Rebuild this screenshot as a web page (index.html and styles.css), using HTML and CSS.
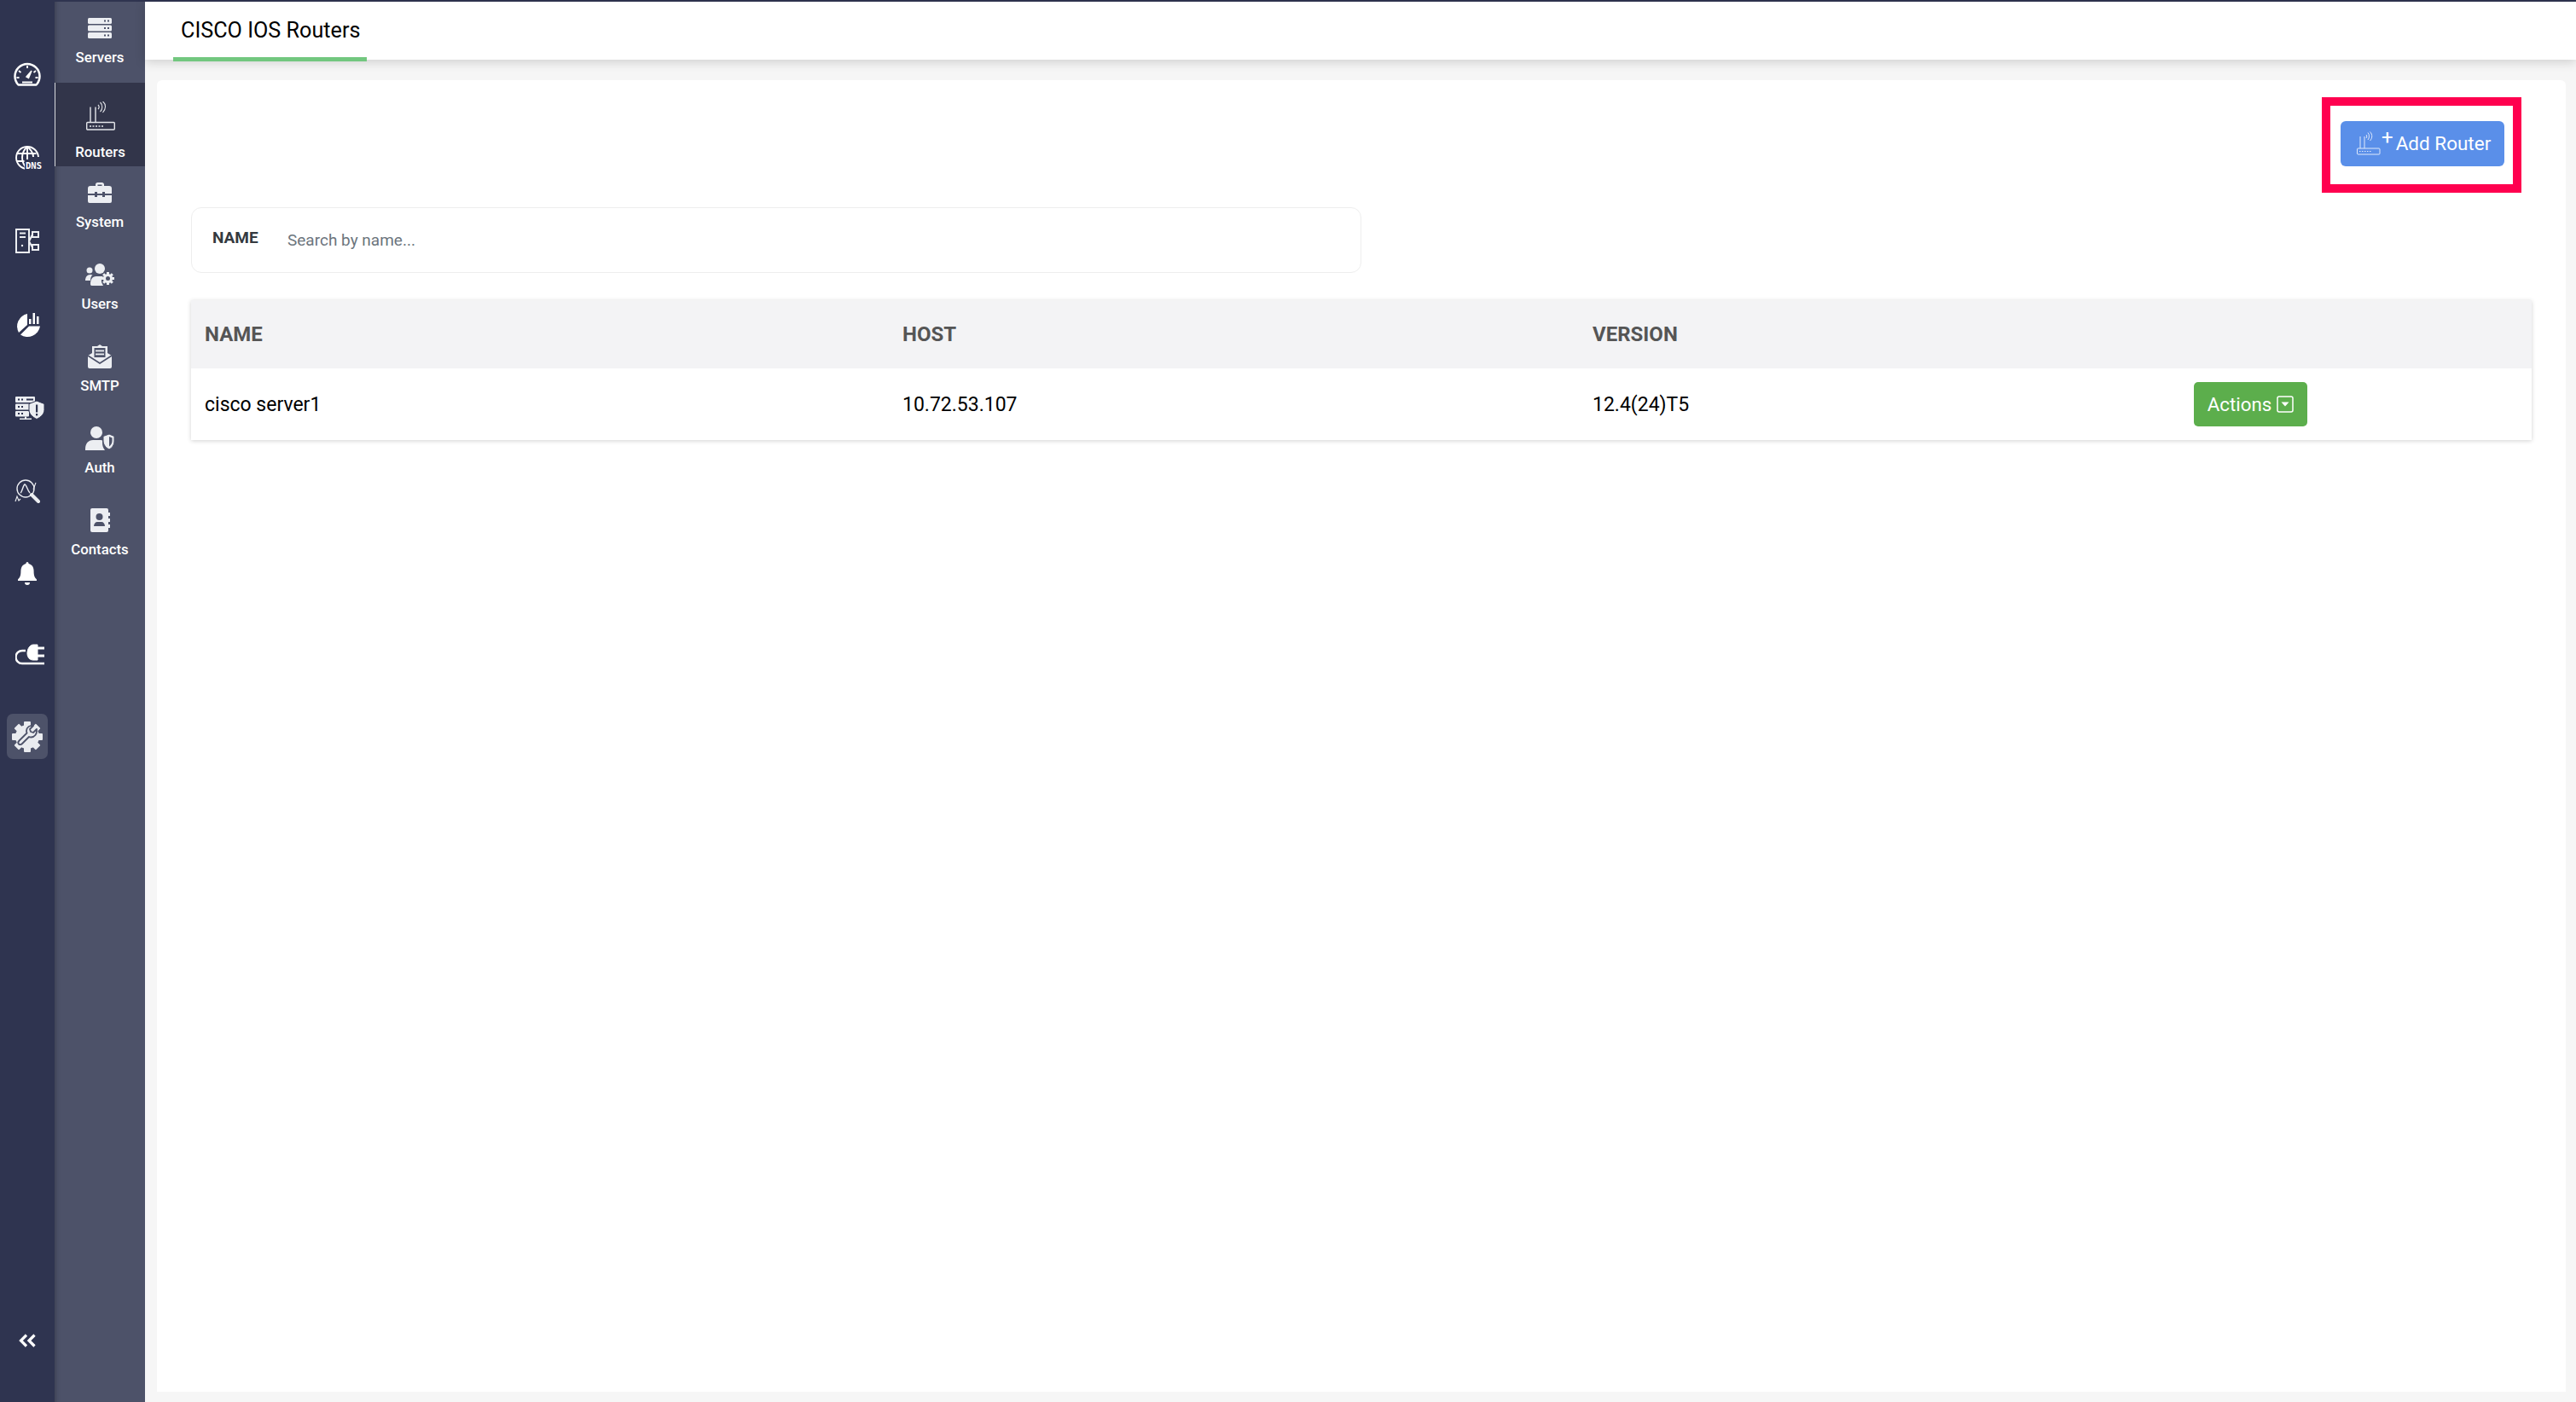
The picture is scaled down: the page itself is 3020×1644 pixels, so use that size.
FILE: index.html
```html
<!DOCTYPE html>
<html lang="en">
<head>
<meta charset="utf-8">
<title>CISCO IOS Routers</title>
<link rel="stylesheet" href="styles.css">
</head>
<body>
<div class="app">
  <nav class="rail">
    <div class="rail-list">
      <a class="rail-item"><svg width="32" height="28" viewBox="0 0 32 28" fill="none" stroke="#fff"><path d="M5.500 26.500A14.500 14.500 0 1 1 26.500 26.500Z" stroke-width="2.500" stroke-linejoin="round"/><path d="M16 4v3M6 10l2.500 2M26 10l-2.500 2M3.500 18h3M25.500 18h3M10 23.500h12" stroke-width="1.800"/><path d="M15 17l6-7-3.500 8.500z" fill="#fff" stroke-width="1.500"/></svg></a>
      <a class="rail-item rail-shifted"><svg width="34" height="28" viewBox="0 0 34 28" fill="none" stroke="#fff" stroke-width="1.900"><path d="M14 27A13 13 0 1 1 27 13"/><path d="M14 1c-8 7-8 18 0 26M14 1c5 4 7 8 7 12M1.500 9h23M1.500 18h9M14 1v26"/><rect x="11" y="16" width="23" height="12" fill="#2f3450" stroke="none"/><text x="12" y="26.500" class="dns-text">DNS</text></svg></a>
      <a class="rail-item"><svg width="28" height="30" viewBox="0 0 28 30" fill="none" stroke="#eceef2" stroke-width="2"><rect x="1" y="1" width="15" height="27"/><path d="M5 5.500h7M5 10h7"/><circle cx="8" cy="20" r="1.200" fill="#eceef2" stroke="none"/><rect x="20" y="4" width="7" height="6"/><rect x="20" y="19" width="7" height="6"/><path d="M16 15l4-8M16 15l4 7"/></svg></a>
      <a class="rail-item"><svg width="30" height="31" viewBox="0 0 30 31" fill="#fff"><path d="M15 2A15 15 0 0 0 5 24L15 15Z"/><path d="M7 26.500A15 15 0 0 0 30 16.500H17Z"/><rect x="17" y="8" width="2.500" height="6"/><rect x="21.500" y="1" width="2.500" height="13"/><rect x="26" y="5" width="2.500" height="9"/></svg></a>
      <a class="rail-item rail-shifted"><svg width="34" height="28" viewBox="0 0 34 28" fill="#eceef2"><rect x="0" y="0" width="23" height="7" rx="1"/><rect x="0" y="8.500" width="17" height="7" rx="1"/><rect x="0" y="17" width="16" height="6.500" rx="1"/><path d="M11 23.500h2v2h6v1.500H5v-1.500h6z"/><path d="M25 5l9 3.500v7c0 5-4 8.500-9 11-5-2.500-9-6-9-11v-7z" stroke="#2f3450" stroke-width="1"/><rect x="24" y="9.500" width="2.200" height="9" fill="#2f3450"/><rect x="24" y="20" width="2.200" height="2.400" fill="#2f3450"/><g fill="#2f3450"><rect x="3" y="2.500" width="2" height="2"/><rect x="7" y="2.500" width="2" height="2"/><rect x="13" y="2.500" width="8" height="2"/><rect x="3" y="11" width="2" height="2"/><rect x="7" y="11" width="2" height="2"/><rect x="3" y="19" width="2" height="2"/><rect x="7" y="19" width="2" height="2"/></g></svg></a>
      <a class="rail-item"><svg width="30" height="30" viewBox="0 0 30 30" fill="none" stroke="#eceef2"><circle cx="13" cy="11" r="10" stroke-width="1.400"/><path d="M7 16c2-1 3-9 5-10 2 0 3 7 6 10" stroke-width="1.400"/><path d="M20 18l8 8" stroke-width="4" stroke-linecap="round"/><path d="M1 26l2-6 2 5 2-2M22 12l3-8" stroke-width="1.100"/></svg></a>
      <a class="rail-item rail-tight"><svg width="22" height="27" viewBox="0 0 22 27" fill="#fff"><path d="M11 0c1 0 1.500.8 1.600 2 4 1 6 4 6 9 0 5 1 7 3.400 9.500v1.500H0v-1.500C2.400 18 3.400 16 3.400 11c0-5 2-8 6-9C9.500.8 10 0 11 0z"/><path d="M8 24h6a3 3 0 0 1-6 0z"/></svg></a>
      <a class="rail-item rail-shifted rail-tight"><svg width="34" height="25" viewBox="0 0 34 25" fill="none" stroke="#fff"><path d="M12 8H8a6 6 0 0 0 0 15h26" stroke-width="2.400"/><path d="M14 11c0-5 3-10 7-10h5v18h-5c-4 0-7-3-7-8z" fill="#fff" stroke-width="1"/><path d="M26 5h8M26 14h8" stroke-width="2.800"/></svg></a>
      <a class="rail-item rail-item-active"><svg width="36" height="36" viewBox="0 0 36 36"><g fill="#e9ebef"><circle cx="18" cy="18" r="14"/><rect x="14" y="0" width="8" height="36" rx="1"/><rect x="14" y="0" width="8" height="36" rx="1" transform="rotate(45 18 18)"/><rect x="14" y="0" width="8" height="36" rx="1" transform="rotate(90 18 18)"/><rect x="14" y="0" width="8" height="36" rx="1" transform="rotate(135 18 18)"/></g><path d="M29 9l-4 4-3-1-1-3 4-4c-4-1-8 2-8 6 0 1 .2 1.800.6 2.500L8.500 22.500c-1.500 1.500-1.500 3-.5 4s2.500 1 4-.5l8-8c.8.4 1.600.5 2.500.5 4 0 7-4 6.500-8z" fill="none" stroke="#4d5269" stroke-width="1.800" stroke-linejoin="round"/></svg></a>
    </div>
    <a class="rail-collapse"><svg width="20" height="16" viewBox="0 0 20 16" fill="none" stroke="#fff" stroke-width="3.200"><path d="M9 1.500L2.500 8 9 14.500M18.500 1.500L12 8l6.500 6.500"/></svg></a>
  </nav>

  <nav class="subnav">
    <a class="sub-item sub-servers"><svg width="28" height="24" viewBox="0 0 28 24"><g fill="#eceef2"><rect y="0" width="28" height="7" rx="1.500"/><rect y="8.500" width="28" height="7" rx="1.500"/><rect y="17" width="28" height="7" rx="1.500"/></g><g fill="#4d5269"><rect x="19" y="2.500" width="2" height="2"/><rect x="23" y="2.500" width="2" height="2"/><rect x="19" y="11" width="2" height="2"/><rect x="23" y="11" width="2" height="2"/><rect x="19" y="19.500" width="2" height="2"/><rect x="23" y="19.500" width="2" height="2"/></g></svg><span>Servers</span></a>
    <a class="sub-item sub-routers"><svg width="34" height="34" viewBox="0 0 34 34" fill="none" stroke="#e4e6ea" stroke-width="1.400"><rect x=".7" y="24.500" width="32.600" height="8.500" rx="1"/><path d="M5 24.500V6.500M11 24.500V6.500"/><path d="M14 9c1.400-1.500 1.400-3.500 0-5M16.500 12c3-3 3-8 0-11M19.500 13c4-4.500 4-10 0-13" stroke-width="1.100"/><path d="M4 29h2M7.500 29h2M11 29h2M14.500 29h2M18 29h2" stroke-width="1.500"/></svg><span>Routers</span></a>
    <a class="sub-item"><svg width="28" height="24" viewBox="0 0 28 24" fill="#eceef2"><path d="M9 4V2.500C9 1 10 0 11.500 0h5C18 0 19 1 19 2.500V4h-2.500V2.500h-5V4z"/><path d="M0 7a3 3 0 0 1 3-3h22a3 3 0 0 1 3 3v6h-8v-2h-3v2h-6v-2H8v2H0z"/><path d="M0 15h8v2h3v-2h6v2h3v-2h8v7a2 2 0 0 1-2 2H2a2 2 0 0 1-2-2z"/></svg><span>System</span></a>
    <a class="sub-item"><svg width="34" height="26" viewBox="0 0 34 26" fill="#eceef2"><circle cx="17" cy="6" r="6"/><circle cx="5" cy="8" r="3.500"/><path d="M0 20c0-4 2-7 6-7 1 0 2 .2 2.500.6C6.500 15 6 18 6 20z"/><path d="M7.500 26c-1 0-1.500-1-1.500-2 0-5 2-9 7-9h8c-2 2-3 6-1 9l1 2z"/><g transform="translate(26.500 17.500)"><circle r="5.500"/><rect x="-1.500" y="-7.500" width="3" height="15"/><rect x="-1.500" y="-7.500" width="3" height="15" transform="rotate(45)"/><rect x="-1.500" y="-7.500" width="3" height="15" transform="rotate(90)"/><rect x="-1.500" y="-7.500" width="3" height="15" transform="rotate(135)"/><circle r="2.500" fill="#4d5269"/></g></svg><span>Users</span></a>
    <a class="sub-item"><svg width="28" height="28" viewBox="0 0 28 28" fill="#eceef2"><path d="M14 0l3 2h6v8l5 3v13a2 2 0 0 1-2 2H2a2 2 0 0 1-2-2V13l5-3V2h6z"/><path d="M7.500 4h13v11h-13z" fill="#4d5269"/><rect x="9" y="6.500" width="10" height="1.800"/><rect x="9" y="10.500" width="10" height="1.800"/><path d="M0 13l14 9 14-9" fill="none" stroke="#4d5269" stroke-width="1.800"/></svg><span>SMTP</span></a>
    <a class="sub-item"><svg width="34" height="28" viewBox="0 0 34 28" fill="#eceef2"><circle cx="13" cy="7" r="7"/><path d="M0 28c-.3-7 3-12 9-12h8c1 0 2 .1 3 .5v3c0 3 1 6 3 8.500z"/><path d="M28 9l6 2.500v5.500c0 5-3 8.500-6 10-3-1.500-7-5-7-10v-5.500z" stroke="#4d5269" stroke-width="1"/><path d="M28 12l3.500 1.500v3.500c0 3-1.500 5-3.500 6.500z" fill="#4d5269"/></svg><span>Auth</span></a>
    <a class="sub-item"><svg width="24" height="28" viewBox="0 0 24 28" fill="#eceef2"><path d="M3 0h17a2 2 0 0 1 2 2v24a2 2 0 0 1-2 2H3a2 2 0 0 1-2-2V2a2 2 0 0 1 2-2z"/><rect x="22" y="5" width="2" height="4"/><rect x="22" y="12" width="2" height="4"/><rect x="22" y="19" width="2" height="4"/><circle cx="11.500" cy="10" r="4" fill="#4d5269"/><path d="M5 21c0-3 2-5 4-5h5c2 0 4 2 4 5z" fill="#4d5269"/></svg><span>Contacts</span></a>
  </nav>

  <div class="main">
    <header class="topbar">
      <div class="tab">CISCO IOS Routers</div>
    </header>
    <main class="card">
      <div class="toolbar">
        <div class="callout">
          <button class="btn-add"><svg width="28" height="28" viewBox="0 0 28 28" fill="none" stroke="#dfe9fb" stroke-width="1"><rect x=".5" y="20" width="26.500" height="7" rx="1"/><path d="M4 20V6M9 20V6"/><path d="M11 8c1-1 1-3 0-4M13 10c2-2.500 2-6 0-8.500M15.500 11c3-3 3-7.500 0-10.500"/><path d="M3 23.500h1.500M6 23.500h1.500M9 23.500h1.500M12 23.500h1.500M15 23.500h1.500"/></svg><span class="plus">+</span><span>Add Router</span></button>
        </div>
      </div>
      <div class="filter">
        <label class="filter-label" for="name-search">NAME</label>
        <input class="filter-input" id="name-search" type="text" placeholder="Search by name...">
      </div>
      <div class="table">
        <div class="row row-head">
          <div>NAME</div><div>HOST</div><div>VERSION</div><div></div>
        </div>
        <div class="row row-body">
          <div>cisco server1</div><div>10.72.53.107</div><div>12.4(24)T5</div>
          <div><button class="btn-actions">Actions<svg width="20" height="20" viewBox="0 0 20 20"><rect x="1" y="1" width="18" height="18" rx="2" fill="none" stroke="#fff" stroke-width="1.500"/><path d="M5.500 7.500h9L10 12.500z" fill="#fff"/></svg></button></div>
        </div>
      </div>
    </main>
  </div>
</div>
</body>
</html>
```
FILE: styles.css
```css
* { box-sizing: border-box; }
html, body { margin: 0; height: 100%; }
body { font-family: Roboto, "Liberation Sans", sans-serif; overflow: hidden; background: #f6f6f6; }
button { font-family: inherit; }

.app { display: flex; height: 1644px; padding-top: 2px; background: #2f3450; }

.rail { width: 64px; flex: none; display: flex; flex-direction: column; align-items: center; background: #2f3450; }
.rail-list { display: flex; flex-direction: column; align-items: center; padding-top: 36px; flex: 1; }
.rail-item { width: 48px; height: 98px; display: flex; align-items: center; justify-content: center; }
.rail-shifted { padding-left: 6px; }
.rail-tight { margin-top: -3px; }
.rail-item-active { height: 53px; margin-top: 21px; background: #4d5269; border-radius: 7px; }
.rail-collapse { display: flex; padding-bottom: 64px; }
.dns-text { font: 700 10.500px "DejaVu Sans Mono", monospace; fill: #fff; stroke: none; }

.subnav { width: 106px; flex: none; display: flex; flex-direction: column; background: #4d5269; box-shadow: inset 6px 0 6px -6px rgba(0,0,0,.35); }
.sub-item { height: 96px; display: flex; flex-direction: column; align-items: center; padding-top: 17px; gap: 11px; color: #fff; font-size: 16.800px; line-height: 18px; font-weight: 500; }
.sub-item svg { height: 28px; flex: none; }
.sub-item span { display: block; }
.sub-servers { height: 95px; }
.sub-routers { height: 98px; padding-top: 22px; gap: 16px; background: #32354a; border-left: 1px solid #d8dade; }
.sub-routers svg { height: 34px; }

.main { flex: 1; min-width: 0; display: flex; flex-direction: column; background: #f6f6f6; }
.topbar { height: 68px; flex: none; padding-left: 33px; background: #fff; box-shadow: 0 3px 12px rgba(0,0,0,.16); position: relative; }
.tab { display: inline-block; width: 227px; height: 70px; padding: 20px 0 0 9px; font-size: 25.200px; line-height: 28px; color: #000; border-bottom: 5px solid #72c77f; }
.card { width: 2824px; height: 1538px; margin: 24px 0 0 14px; padding: 20px 40px 0; background: #fff; border-radius: 6px 6px 0 0; }

.toolbar { display: flex; justify-content: flex-end; padding-right: 12px; }
.callout { width: 234px; height: 112px; padding: 18px 10px 0 12px; border: 10px solid #ff004f; }
.btn-add { width: 192px; height: 53px; display: flex; align-items: center; padding: 0 0 1px 19px; border: 0; border-radius: 6px; background: #5a8fe9; color: #fff; font-size: 22.500px; }
.plus { margin: -14px 3px 0 1px; font-size: 24px; line-height: 24px; }

.filter { width: 1372px; height: 77px; margin-top: 17px; display: flex; align-items: center; padding: 0 0 0 24px; border: 1px solid #eee; border-radius: 12px; }
.filter-label { width: 88px; font-size: 19px; font-weight: 700; color: #343a40; margin-top: -6px; }
.filter-input { flex: 1; height: 40px; border: 0; outline: 0; padding: 0; font: 19px Roboto, sans-serif; color: #495057; background: transparent; }
.filter-input::placeholder { color: #6c757d; opacity: 1; }

.table { margin-top: 32px; height: 164px; box-shadow: 0 1px 5px rgba(0,0,0,.18); }
.row { display: grid; grid-template-columns: 818px 809px 705px 1fr; align-items: center; padding-left: 16px; }
.row-head { height: 80px; background: #f3f3f5; color: #555; font-size: 24px; font-weight: 700; }
.row-body { height: 84px; background: #fff; color: #000; font-size: 23px; }
.btn-actions { width: 133px; height: 52px; display: flex; align-items: center; justify-content: center; gap: 6px; border: 0; border-radius: 5px; background: #5cae4c; color: #fff; font-size: 22.300px; padding: 0; }
```
